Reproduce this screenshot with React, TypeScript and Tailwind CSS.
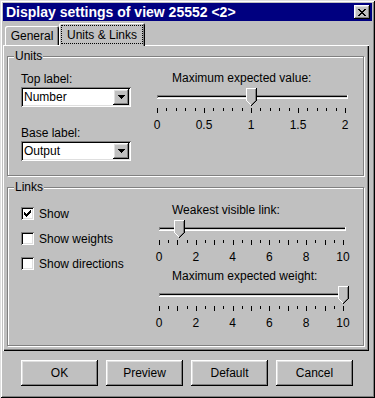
import React from 'react'

const font = "font-['Liberation_Sans',Arial,Helvetica,sans-serif]"
const raised = 'shadow-[inset_-1px_-1px_#000,inset_1px_1px_#fff,inset_-2px_-2px_#808080,inset_2px_2px_#dfdfdf]'
const sunken = 'shadow-[inset_1px_1px_#808080,inset_-1px_-1px_#fff,inset_2px_2px_#000,inset_-2px_-2px_#dfdfdf]'

// pixel glyphs, one string per row
const CLOSE = ['XX....XX', '.XX..XX.', '..XXXX..', '...XX...', '..XXXX..', '.XX..XX.', 'XX....XX']
const CHECK = ['......X', '.....XX', 'X...XXX', 'XX.XXX.', 'XXXXX..', '.XXX...', '..X....']
const ARROW = ['XXXXXXX', '.XXXXX.', '..XXX..', '...X...']

function Glyph({ rows }: { rows: string[] }) {
  return (
    <svg width={rows[0].length} height={rows.length} shapeRendering="crispEdges" className="block">
      {rows.flatMap((r, y) => r.split('').map((c, x) => c === 'X' ? <rect key={`${x}-${y}`} x={x} y={y} width={1} height={1} fill="#000" /> : null))}
    </svg>
  )
}

function Group({ title, className = '', children }: { title: string; className?: string; children: React.ReactNode }) {
  return (
    <div className={`relative w-[357px] border border-[#808080] shadow-[inset_1px_1px_#fff,1px_1px_#fff] ${className}`}>
      <span className="absolute -top-[8px] left-[6px] px-[1px] bg-[#c0c0c0] text-[12px] leading-[14px]">{title}</span>
      {children}
    </div>
  )
}

function Select({ value }: { value: string }) {
  return (
    <div className={`w-[110px] h-[20px] bg-white flex items-center justify-between pl-[3px] pr-[2px] ${sunken}`}>
      <span className="text-[12px] leading-[14px]">{value}</span>
      <div className={`w-[16px] h-[16px] bg-[#c0c0c0] flex items-center justify-center ${raised}`}>
        <Glyph rows={ARROW} />
      </div>
    </div>
  )
}

function Check({ label, checked }: { label: string; checked?: boolean }) {
  return (
    <div className="flex items-center gap-[5px] h-[13px]">
      <div className={`w-[13px] h-[13px] bg-white flex items-center justify-center ${sunken}`}>
        {checked && <Glyph rows={CHECK} />}
      </div>
      <span className="text-[12px] leading-[14px] whitespace-nowrap">{label}</span>
    </div>
  )
}

interface SliderProps { label: string; value: number; max: number; steps: number; major: number; labels: number[]; x0: number; x1: number }

function Slider({ label, value, max, steps, major, labels, x0, x1 }: SliderProps) {
  const pos = (v: number) => x0 + ((x1 - x0) * v) / max
  const tx = Math.round(pos(value))
  const thumb: React.ReactNode[] = []
  for (let y = 0; y < 13; y++) {
    thumb.push(<rect key={`f${y}`} x={0} y={y} width={11} height={1} fill="#c0c0c0" />)
    thumb.push(<rect key={`l${y}`} x={0} y={y} width={1} height={1} fill="#fff" />)
    thumb.push(<rect key={`b${y}`} x={10} y={y} width={1} height={1} fill="#000" />)
    if (y > 0) thumb.push(<rect key={`g${y}`} x={9} y={y} width={1} height={1} fill="#808080" />)
  }
  thumb.push(<rect key="top" x={0} y={0} width={10} height={1} fill="#fff" />)
  for (let k = 0; k < 5; k++) {
    const y = 13 + k
    const l = k + 1
    const r = 9 - k
    if (r > l) thumb.push(<rect key={`pf${k}`} x={l} y={y} width={r - l} height={1} fill="#c0c0c0" />)
    if (r > l) thumb.push(<rect key={`pl${k}`} x={l} y={y} width={1} height={1} fill="#fff" />)
    if (r - 1 > l) thumb.push(<rect key={`pg${k}`} x={r - 1} y={y} width={1} height={1} fill="#808080" />)
    thumb.push(<rect key={`pb${k}`} x={r} y={y} width={1} height={1} fill="#000" />)
  }
  return (
    <div className="w-[200px]">
      <div className="pl-[20px] text-[12px] leading-[14px]">{label}</div>
      <svg width="200" height="26" shapeRendering="crispEdges" className="block mt-[3px]">
        <rect x={x0} y={7} width={x1 - x0 + 3} height={1} fill="#808080" />
        <rect x={x0} y={8} width={1} height={2} fill="#808080" />
        <rect x={x0 + 1} y={8} width={x1 - x0 + 1} height={1} fill="#000" />
        <rect x={x0 + 1} y={9} width={x1 - x0 + 1} height={1} fill="#dfdfdf" />
        <rect x={x0} y={10} width={x1 - x0 + 3} height={1} fill="#fff" />
        <rect x={x1 + 2} y={7} width={1} height={4} fill="#fff" />
        {Array.from({ length: steps + 1 }, (_, i) => (
          <rect key={i} x={Math.round(x0 + ((x1 - x0) * i) / steps)} y={20} width={1} height={i % major === 0 ? 5 : 3} fill="#000" />
        ))}
        <g transform={`translate(${tx - 5},0)`}>{thumb}</g>
      </svg>
      <div className="relative h-[14px] mt-[4px] text-[12px] leading-[14px]">
        {labels.map(v => (
          <span key={v} className="absolute top-0 -translate-x-1/2" style={{ left: pos(v) }}>{v}</span>
        ))}
      </div>
    </div>
  )
}

export default function App() {
  return (
    <div className={`w-[375px] h-[398px] bg-[#c0c0c0] p-[3px] flex flex-col text-black ${font} shadow-[inset_1px_1px_#dfdfdf,inset_-1px_-1px_#000,inset_2px_2px_#fff,inset_-2px_-2px_#808080]`}>
      <div className="h-[18px] bg-[#000080] flex items-center justify-between pl-[3px] pr-[2px]">
        <span className="text-white font-bold text-[14px] leading-[18px] whitespace-nowrap">Display settings of view 25552 &lt;2&gt;</span>
        <div className={`w-[16px] h-[14px] bg-[#c0c0c0] flex items-center justify-center ${raised}`}>
          <Glyph rows={CLOSE} />
        </div>
      </div>

      <div className="h-[24px] flex items-end pl-[2px] text-[12px] leading-[14px]">
        <div className="w-[54px] h-[19px] pt-[3px] text-center rounded-t-[2px] shadow-[inset_1px_1px_#fff,inset_-1px_0_#000,inset_-2px_0_#808080]">General</div>
        <div className="relative z-10 -mb-px w-[86px] h-[23px] bg-[#c0c0c0] pt-[2px] pl-[2px] rounded-t-[2px] shadow-[inset_1px_1px_#fff,inset_-1px_0_#000,inset_-2px_0_#808080]">
          <div className="w-[82px] h-[19px] border border-dotted border-black flex items-center justify-center whitespace-nowrap">Units &amp; Links</div>
        </div>
      </div>

      <div className="w-[366px] h-[306px] pt-[11px] pl-[4px] flex flex-col shadow-[inset_1px_1px_#fff,inset_-1px_-1px_#000,inset_-2px_-2px_#808080]">
        <Group title="Units" className="h-[120px]">
          <div className="flex pt-[14px] text-[12px] leading-[14px]">
            <div className="ml-[13px] w-[131px] mt-[1px] flex flex-col">
              <span>Top label:</span>
              <div className="mt-[1px]"><Select value="Number" /></div>
              <span className="mt-[19px]">Base label:</span>
              <div className="mt-[1px]"><Select value="Output" /></div>
            </div>
            <Slider label="Maximum expected value:" value={1} max={2} steps={20} major={5} labels={[0, 0.5, 1, 1.5, 2]} x0={5} x1={193} />
          </div>
        </Group>

        <Group title="Links" className="h-[159px] mt-[11px]">
          <div className="flex pt-[15px]">
            <div className="ml-[13px] w-[131px] mt-[4px] flex flex-col gap-[12px]">
              <Check label="Show" checked />
              <Check label="Show weights" />
              <Check label="Show directions" />
            </div>
            <div className="flex flex-col">
              <Slider label="Weakest visible link:" value={1.1} max={10} steps={20} major={2} labels={[0, 2, 4, 6, 8, 10]} x0={7} x1={191} />
              <div className="mt-[5px]">
                <Slider label="Maximum expected weight:" value={10} max={10} steps={20} major={2} labels={[0, 2, 4, 6, 8, 10]} x0={7} x1={191} />
              </div>
            </div>
          </div>
        </Group>
      </div>

      <div className="mt-[9px] ml-[18px] flex gap-[8px]">
        {['OK', 'Preview', 'Default', 'Cancel'].map(t => (
          <div key={t} className={`w-[77px] h-[26px] flex items-center justify-center text-[12px] leading-[14px] ${raised}`}>{t}</div>
        ))}
      </div>
    </div>
  )
}
